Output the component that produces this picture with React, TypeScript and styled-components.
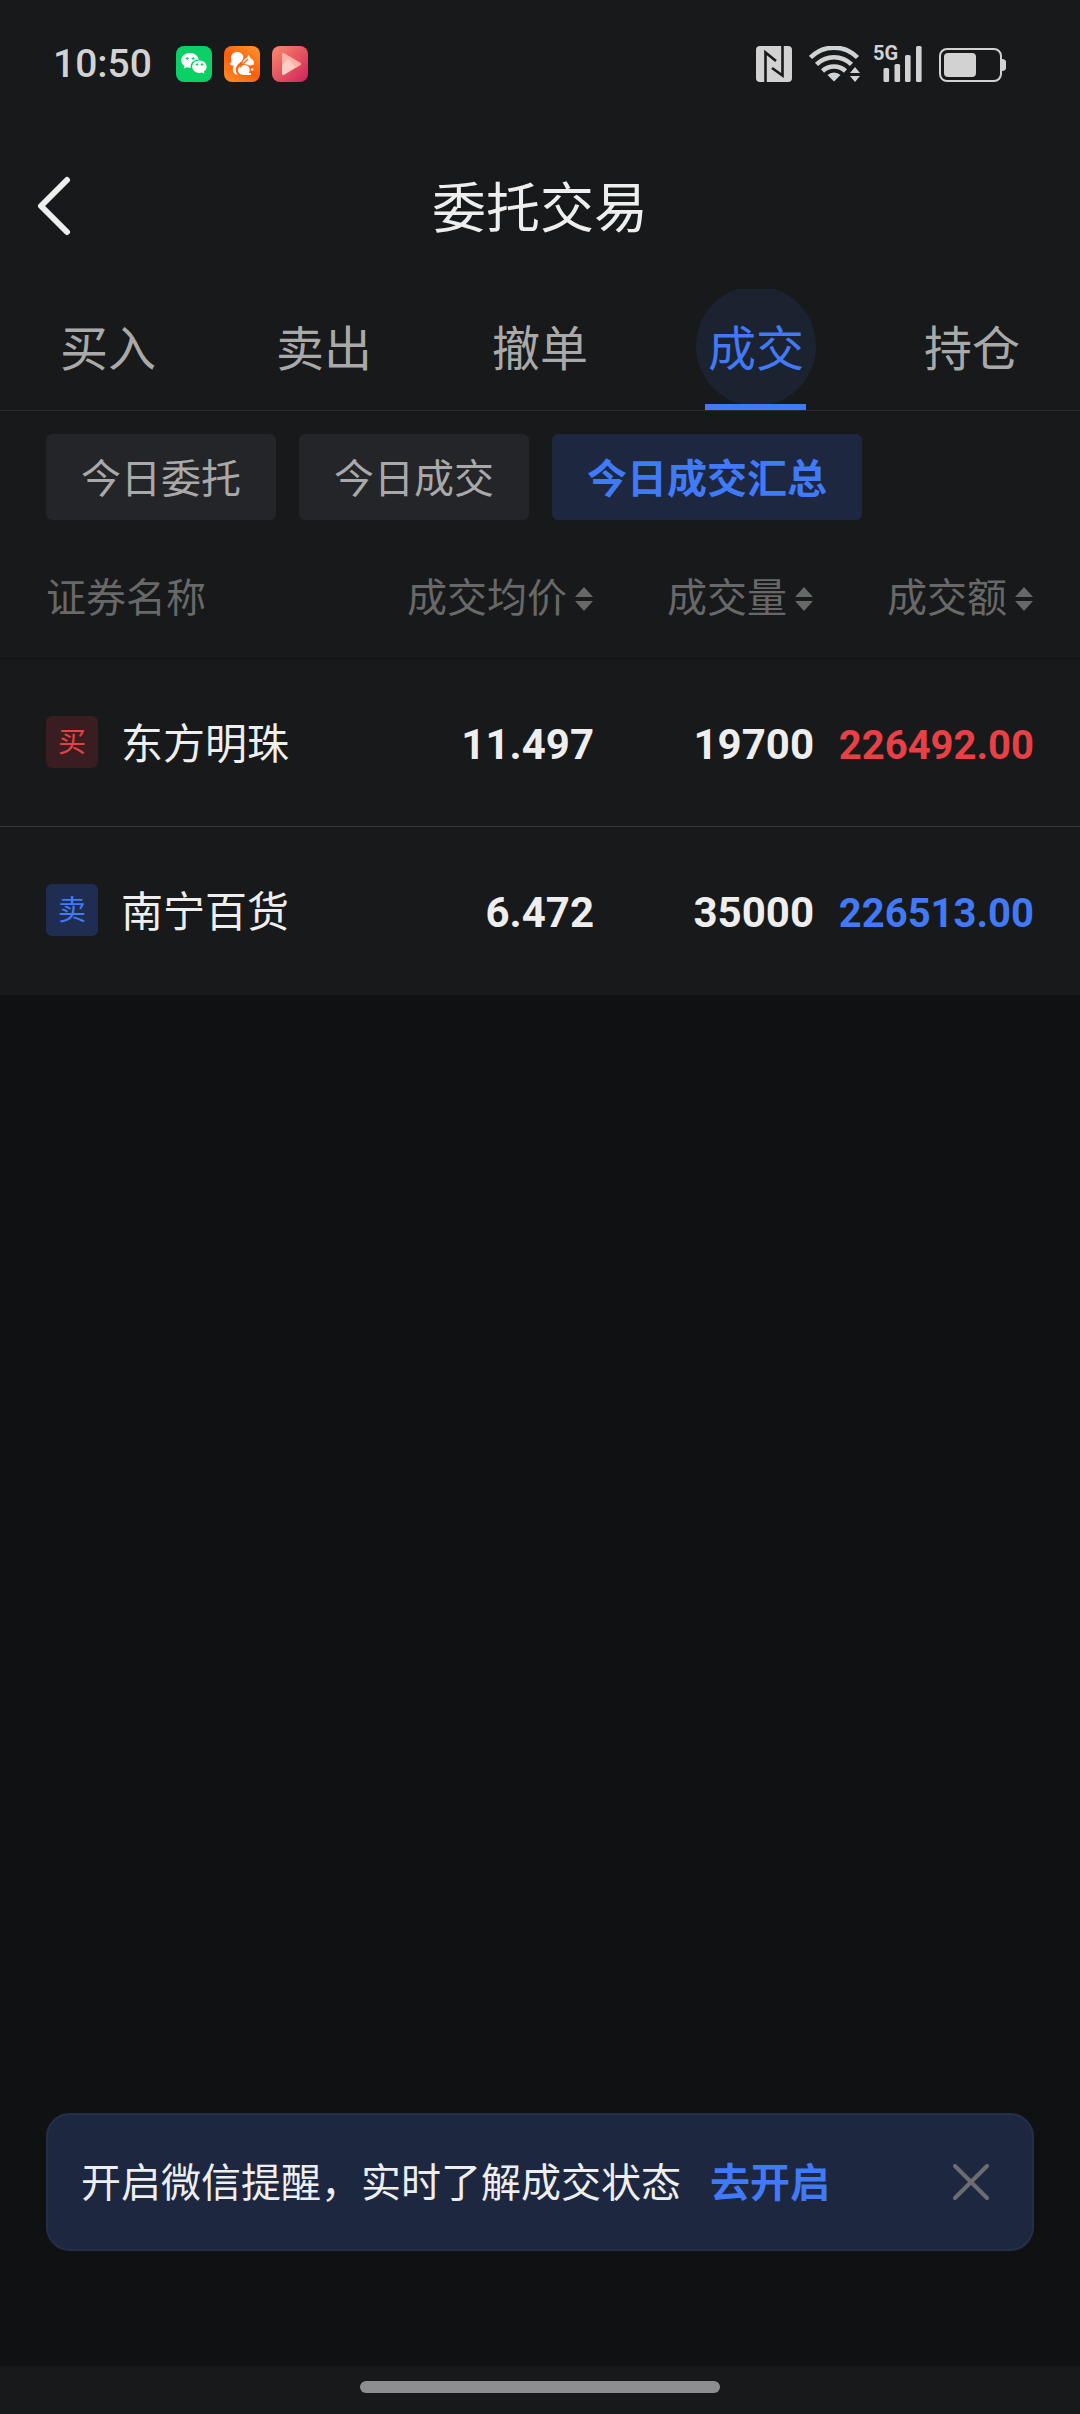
import React from 'react';
import styled, { createGlobalStyle } from 'styled-components';

const color = {
  surface: '#17191a',
  page: '#0f1112',
  chip: '#242529',
  line: '#292b2c',
  text: '#eeeeee',
  textSecondary: '#a9a9a9',
  textMuted: '#686868',
  status: '#d2d2d2',
  blue: '#417af7',
  blueSoft: '#1d2740',
  red: '#e84045',
};

const GlobalStyle = createGlobalStyle`
  *, *::before, *::after { box-sizing: border-box; }
  body {
    margin: 0;
    background: ${color.page};
    color: ${color.text};
    font-family: Roboto, "Noto Sans CJK SC", sans-serif;
  }
  button { border: 0; padding: 0; background: none; color: inherit; font: inherit; cursor: pointer; }
  svg { display: block; flex: none; }
`;

const Screen = styled.div`
  min-height: 100vh;
  display: flex;
  flex-direction: column;
`;

const StatusBar = styled.div`
  display: flex;
  align-items: center;
  justify-content: space-between;
  height: 128px;
  padding: 0 73px 0 53px;
  background: ${color.surface};
  color: ${color.status};
`;

const StatusGroup = styled.div<{ $gap: number }>`
  display: flex;
  align-items: center;
  gap: ${(p) => p.$gap}px;
`;

const Clock = styled.time`
  margin-right: 12px;
  font-size: 39px;
  line-height: 48px;
  font-weight: 500;
`;

const TitleBar = styled.header`
  display: grid;
  grid-template-columns: 120px 1fr 120px;
  align-items: center;
  height: 161px;
  padding-bottom: 6px;
  background: ${color.surface};
`;

const BackButton = styled.button`
  display: flex;
  align-items: center;
  height: 96px;
  padding-left: 36px;
`;

const Title = styled.h1`
  margin: 0;
  padding-top: 8px;
  text-align: center;
  font-size: 54px;
  line-height: 72px;
  font-weight: 400;
`;

const TabBar = styled.nav`
  display: grid;
  grid-template-columns: repeat(5, 1fr);
  height: 122px;
  overflow: hidden;
  background: ${color.surface};
  border-bottom: 1px solid ${color.line};
`;

const Tab = styled.button<{ $active: boolean }>`
  position: relative;
  display: flex;
  align-items: center;
  justify-content: center;
  font-size: 48px;
  line-height: 64px;
  color: ${(p) => (p.$active ? color.blue : color.textSecondary)};

  &::before {
    content: '';
    display: ${(p) => (p.$active ? 'block' : 'none')};
    position: absolute;
    top: 50%;
    left: 50%;
    width: 120px;
    height: 120px;
    margin: -64px 0 0 -60px;
    border-radius: 50%;
    background: rgba(65, 122, 247, 0.1);
  }

  &::after {
    content: '';
    display: ${(p) => (p.$active ? 'block' : 'none')};
    position: absolute;
    bottom: 0;
    left: 50%;
    width: 101px;
    height: 6px;
    margin-left: -51px;
    background: ${color.blue};
  }
`;

const ChipRow = styled.div`
  display: flex;
  gap: 23px;
  padding: 23px 46px 28px;
  background: ${color.surface};
`;

const Chip = styled.button<{ $active: boolean }>`
  height: 86px;
  padding: 6px 35px 0;
  border-radius: 6px;
  font-size: 40px;
  line-height: 56px;
  white-space: nowrap;
  background: ${(p) => (p.$active ? color.blueSoft : color.chip)};
  color: ${(p) => (p.$active ? color.blue : color.textSecondary)};
  font-weight: ${(p) => (p.$active ? 700 : 400)};
`;

const DealTable = styled.table`
  width: 100%;
  border-collapse: separate;
  border-spacing: 0;
  table-layout: fixed;
  background: ${color.surface};
`;

const NameCol = styled.col`
  width: 32%;
`;

const PriceCol = styled.col`
  width: 23%;
`;

const VolumeCol = styled.col`
  width: 220px;
`;

const AmountCol = styled.col`
  width: 266px;
`;

const HeadCell = styled.th<{ $align: 'left' | 'right' }>`
  height: 111px;
  padding: 0 0 8px;
  text-align: ${(p) => p.$align};
  border-bottom: 1px solid ${color.page};
  font-size: 40px;
  line-height: 56px;
  font-weight: 400;
  color: ${color.textMuted};
  white-space: nowrap;

  &:first-child { padding-left: 46px; }
  &:last-child { padding-right: 46px; }
`;

const SortButton = styled.button`
  display: inline-flex;
  align-items: center;
  gap: 8px;
`;

const Cell = styled.td`
  height: 168px;
  padding: 4px 0 0;
  text-align: right;
  border-bottom: 1px solid #343637;
  font-size: 42px;
  line-height: 56px;
  font-weight: 700;
  white-space: nowrap;

  &:first-child { padding: 0 0 2px 46px; }
  &:last-child { padding-right: 46px; }
  tr:last-child > & { border-bottom-color: ${color.surface}; }
`;

const Stock = styled.div`
  display: flex;
  align-items: center;
  gap: 23px;
  font-weight: 400;
`;

const StockName = styled.span`
  padding-top: 6px;
`;

type Side = 'buy' | 'sell';

const SideBadge = styled.span<{ $side: Side }>`
  display: flex;
  align-items: center;
  justify-content: center;
  width: 52px;
  height: 52px;
  padding-top: 2px;
  border-radius: 6px;
  font-size: 28px;
  line-height: 36px;
  color: ${(p) => (p.$side === 'buy' ? color.red : color.blue)};
  background: ${(p) => (p.$side === 'buy' ? '#391d20' : '#1f2d52')};
`;

const Amount = styled.span<{ $side: Side }>`
  display: block;
  padding-top: 2px;
  font-size: 40px;
  color: ${(p) => (p.$side === 'buy' ? color.red : color.blue)};
`;

const Spacer = styled.main`
  flex: 1;
`;

const Notice = styled.aside`
  display: flex;
  align-items: center;
  height: 138px;
  margin: 0 46px 115px;
  padding: 0 34px 0 33px;
  border: 2px solid #242f49;
  border-radius: 24px;
  background: ${color.blueSoft};
  font-size: 40px;
  line-height: 56px;
`;

const NoticeText = styled.p`
  margin: 0;
  padding-top: 4px;
`;

const NoticeLink = styled.a`
  margin-left: 29px;
  color: ${color.blue};
  font-weight: 700;
  text-decoration: none;
`;

const CloseButton = styled.button`
  margin-left: auto;
  padding: 9px;
`;

const HomeArea = styled.footer`
  display: flex;
  justify-content: center;
  height: 48px;
  padding-top: 15px;
  background: ${color.surface};
`;

const HomePill = styled.div`
  width: 33.33%;
  height: 12px;
  border-radius: 6px;
  background: #8d8e8f;
`;

const WeChatIcon = () => (
  <svg width="36" height="36" viewBox="0 0 36 36" aria-hidden="true">
    <rect width="36" height="36" rx="8" fill="#0bd066" />
    <path
      fill="#fff"
      d="M14 7c-4.900 0-8.700 3.300-8.700 7.400 0 2.400 1.200 4.300 3.200 5.700l-.8 2.700 3-1.500c1 .3 2 .5 3.200.5h.9c-1-4.500 3-8.300 8-8.200C22 9.700 18.400 7 14 7z"
    />
    <path
      fill="#fff"
      d="M23.400 14.500c-4 0-7.200 2.800-7.200 6.200s3.200 6.200 7.200 6.200c.9 0 1.700-.1 2.500-.4l2.500 1.300-.7-2.200c1.800-1.200 2.900-2.900 2.900-4.900 0-3.400-3.200-6.200-7.200-6.200z"
    />
    <g stroke="#0bd066" strokeWidth="1">
      <path d="M11.200 11v3M9.700 12.500h3M17.200 11v3M15.700 12.500h3M21 17.200v2.600M19.700 18.500h2.600M26 17.200v2.600M24.700 18.500h2.600" />
    </g>
  </svg>
);

const SquirrelIcon = () => (
  <svg width="36" height="36" viewBox="0 0 36 36" aria-hidden="true">
    <defs>
      <linearGradient id="squirrel" x1="1" y1="0" x2="0.3" y2="1">
        <stop offset="0" stopColor="#ff9a2e" />
        <stop offset="0.6" stopColor="#ff5c0c" />
        <stop offset="1" stopColor="#ff8420" />
      </linearGradient>
    </defs>
    <rect width="36" height="36" rx="8" fill="url(#squirrel)" />
    <path
      fill="#fff"
      d="M6.200 17.500C8 16 7 14 6.900 12.300 6.800 8.700 9.600 6 13.200 6c3.400 0 6 2.300 6.100 5.300 0 2.300-1.500 3.800-3.200 5.300-2.600 2.400-4.600 4.300-4.300 8 .1 1.600.8 3 1.800 4.300-3.200-.5-5-2.800-4.800-5.700.1-1.400.6-2.600 1.200-3.700-1.500.4-3.200-.1-4.500-2z"
    />
    <path
      fill="#fff"
      d="M18 18.300c.8-3.200 2.300-5.500 5-6.500l1.400-3.300 2 3.600c2.500 1.300 3.900 3.500 3.600 6.400l-4 .9c-1.400.1-2.500-.2-3.600-1.100-1.300-.5-2.900-.4-4.400 0z"
    />
    <path
      fill="#fff"
      d="M20 18.700c3.300 0 5.700 2.300 5.700 5.300 0 1.400-.4 2.300-.8 3h2v2H18.500c-2.700-.6-4.500-2.500-4.500-5 0-3 2.700-5.300 6-5.300z"
    />
    <path stroke="#ff6b14" strokeWidth="1.400" fill="none" d="m24 13-8 8" />
    <circle cx="28.200" cy="23.500" r="1.300" fill="#fff" />
  </svg>
);

const VideoIcon = () => (
  <svg width="36" height="36" viewBox="0 0 36 36" aria-hidden="true">
    <defs>
      <linearGradient id="video" x1="0" y1="0" x2="1" y2="1">
        <stop offset="0" stopColor="#fb8a70" />
        <stop offset="0.55" stopColor="#e2505f" />
        <stop offset="1" stopColor="#d01f5c" />
      </linearGradient>
    </defs>
    <rect width="36" height="36" rx="8" fill="url(#video)" />
    <path
      d="M11.500 8.500v19l16-9.500z"
      fill="#ffb3a8"
      stroke="#ffb3a8"
      strokeWidth="3"
      strokeLinejoin="round"
    />
    <path d="M10 20v7.500c0 1.200 1 1.600 2 1.200L23 21l-7-8z" fill="#ffdcd2" opacity="0.7" />
  </svg>
);

const NfcIcon = () => (
  <svg width="36" height="36" viewBox="0 0 36 36" aria-hidden="true">
    <rect width="36" height="36" rx="4" fill={color.status} />
    <path d="M9.500 36V6.500L20 15M26.500 0v29.500L16 22" fill="none" stroke={color.surface} strokeWidth="2.600" />
  </svg>
);

const WifiIcon = () => (
  <svg width="52" height="36" viewBox="0 0 52 36" aria-hidden="true">
    <g fill="none" stroke={color.status} strokeWidth="4.500">
      <path d="M1.500 11.500a33 33 0 0 1 47 0" />
      <path d="M7.500 18.300a25 25 0 0 1 35 0" />
      <path d="M13.500 25a17 17 0 0 1 23 0" />
    </g>
    <path d="M25 35.500l-6.500-6.500a9.500 9.500 0 0 1 13 0z" fill={color.status} />
    <path d="M46 21l5 6H41zM46 36l5-6H41z" fill={color.status} />
  </svg>
);

const SignalWrap = styled.div`
  position: relative;
  width: 48px;
  height: 36px;
  margin-left: -4px;
`;

const SignalLabel = styled.span`
  position: absolute;
  top: -1px;
  left: -1px;
  font-size: 20px;
  line-height: 16px;
  font-weight: 700;
`;

const SignalIcon = () => (
  <SignalWrap>
    <SignalLabel>5G</SignalLabel>
    <svg width="48" height="36" viewBox="0 0 48 36" aria-hidden="true">
      <g fill={color.status}>
        <rect x="9.500" y="22" width="5.600" height="14" rx="1.500" />
        <rect x="20.500" y="18" width="5.600" height="18" rx="1.500" />
        <rect x="31" y="9" width="5.600" height="27" rx="1.500" />
        <rect x="42" y="0" width="5.600" height="36" rx="1.500" />
      </g>
    </svg>
  </SignalWrap>
);

const BatteryIcon = () => (
  <svg width="68" height="36" viewBox="0 0 68 36" aria-hidden="true">
    <rect x="1" y="3" width="61" height="32" rx="7" fill="none" stroke={color.status} strokeWidth="2" />
    <rect x="5" y="7" width="32" height="24" rx="4" fill={color.status} />
    <path d="M63 13c3 0 4 1.500 4 3v6c0 1.500-1 3-4 3z" fill={color.status} />
  </svg>
);

const BackIcon = () => (
  <svg width="36" height="60" viewBox="0 0 36 60" aria-hidden="true">
    <path
      d="M31 4 5 30l26 26"
      fill="none"
      stroke={color.text}
      strokeWidth="6"
      strokeLinecap="round"
      strokeLinejoin="round"
    />
  </svg>
);

const SortIcon = () => (
  <svg width="19" height="26" viewBox="0 0 19 26" aria-hidden="true">
    <path d="M9 1l9 10H0zM9 25l9-10H0z" fill={color.textMuted} />
  </svg>
);

const CloseIcon = () => (
  <svg width="36" height="36" viewBox="0 0 36 36" aria-hidden="true">
    <path d="M2 2l32 32M34 2 2 34" stroke="#6c6d6e" strokeWidth="4" strokeLinecap="round" />
  </svg>
);

const tabs = ['买入', '卖出', '撤单', '成交', '持仓'];
const chips = ['今日委托', '今日成交', '今日成交汇总'];
const sortable = ['成交均价', '成交量', '成交额'];

const deals: { side: Side; name: string; price: string; volume: string; amount: string }[] = [
  { side: 'buy', name: '东方明珠', price: '11.497', volume: '19700', amount: '226492.00' },
  { side: 'sell', name: '南宁百货', price: '6.472', volume: '35000', amount: '226513.00' },
];

export default function App() {
  const [tab, setTab] = React.useState('成交');
  const [chip, setChip] = React.useState('今日成交汇总');
  const [noticeOpen, setNoticeOpen] = React.useState(true);

  return (
    <Screen>
      <GlobalStyle />
      <StatusBar>
        <StatusGroup $gap={12}>
          <Clock>10:50</Clock>
          <WeChatIcon />
          <SquirrelIcon />
          <VideoIcon />
        </StatusGroup>
        <StatusGroup $gap={17}>
          <NfcIcon />
          <WifiIcon />
          <SignalIcon />
          <BatteryIcon />
        </StatusGroup>
      </StatusBar>

      <TitleBar>
        <BackButton aria-label="返回">
          <BackIcon />
        </BackButton>
        <Title>委托交易</Title>
      </TitleBar>

      <TabBar>
        {tabs.map((label) => (
          <Tab key={label} $active={label === tab} onClick={() => setTab(label)}>
            {label}
          </Tab>
        ))}
      </TabBar>

      <ChipRow>
        {chips.map((label) => (
          <Chip key={label} $active={label === chip} onClick={() => setChip(label)}>
            {label}
          </Chip>
        ))}
      </ChipRow>

      <DealTable>
        <colgroup>
          <NameCol />
          <PriceCol />
          <VolumeCol />
          <AmountCol />
        </colgroup>
        <thead>
          <tr>
            <HeadCell $align="left">证券名称</HeadCell>
            {sortable.map((label) => (
              <HeadCell key={label} $align="right">
                <SortButton>
                  {label}
                  <SortIcon />
                </SortButton>
              </HeadCell>
            ))}
          </tr>
        </thead>
        <tbody>
          {deals.map((deal) => (
            <tr key={deal.name}>
              <Cell>
                <Stock>
                  <SideBadge $side={deal.side}>{deal.side === 'buy' ? '买' : '卖'}</SideBadge>
                  <StockName>{deal.name}</StockName>
                </Stock>
              </Cell>
              <Cell>{deal.price}</Cell>
              <Cell>{deal.volume}</Cell>
              <Cell>
                <Amount $side={deal.side}>{deal.amount}</Amount>
              </Cell>
            </tr>
          ))}
        </tbody>
      </DealTable>

      <Spacer />

      {noticeOpen && (
        <Notice>
          <NoticeText>
            开启微信提醒，实时了解成交状态
            <NoticeLink href="#wechat">去开启</NoticeLink>
          </NoticeText>
          <CloseButton aria-label="关闭" onClick={() => setNoticeOpen(false)}>
            <CloseIcon />
          </CloseButton>
        </Notice>
      )}

      <HomeArea>
        <HomePill />
      </HomeArea>
    </Screen>
  );
}
